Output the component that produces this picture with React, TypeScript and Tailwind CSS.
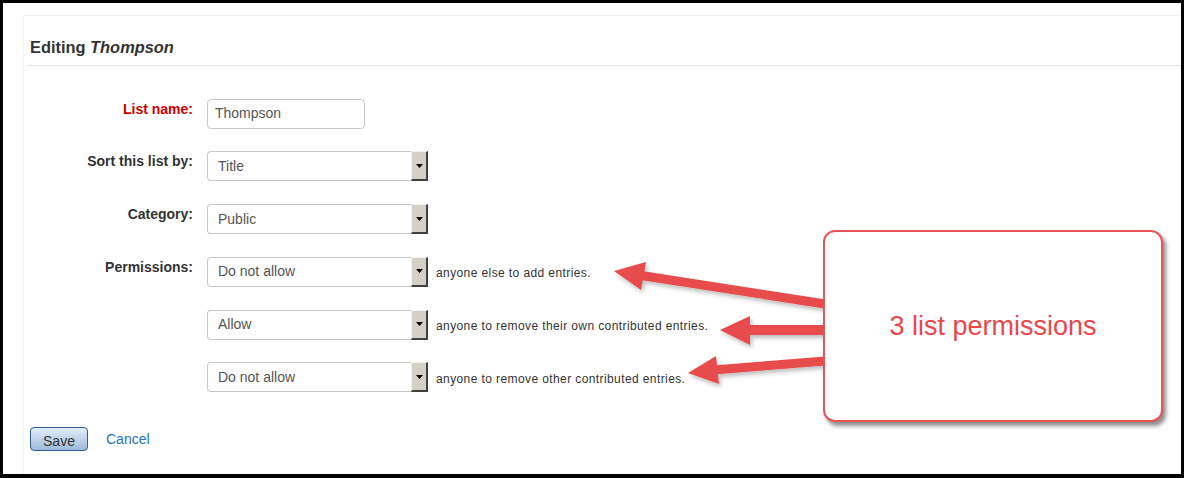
import React from 'react';

const font = { fontFamily: '"Liberation Sans", Arial, sans-serif' };

function Select({ value }: { value: string }) {
  return (
    <div className="flex h-[30px] w-[221px]">
      <div className="flex flex-1 items-center rounded-l-[4px] border border-r-0 border-[#c8c8c8] bg-white pl-[10px] text-[14px] text-[#555]">
        {value}
      </div>
      <div className="flex w-[17px] items-center justify-center border-t border-l border-t-[#f4f2ee] border-l-[#f4f2ee] border-r-2 border-b-2 border-r-[#404040] border-b-[#404040] bg-[#d4d0c8]">
        <svg width="7" height="4" viewBox="0 0 7 4">
          <path d="M0 0h7L3.5 4z" fill="#000" />
        </svg>
      </div>
    </div>
  );
}

function Row({ label, red, children, note }: { label: string; red?: boolean; children: React.ReactNode; note?: string }) {
  return (
    <div className="flex items-start">
      <div className={`w-[183px] pr-[14px] text-right text-[14px] leading-[20px] font-bold ${red ? 'text-[#cc0000]' : 'text-[#333]'}`}>
        {label}
      </div>
      {children}
      {note && (
        <div className="ml-[8px] self-center pt-[3px] text-[12px] tracking-[0.4px] text-[#333]">{note}</div>
      )}
    </div>
  );
}

export default function App() {
  return (
    <div className="relative h-[478px] w-[1184px] overflow-hidden border-t-[3px] border-r-[3px] border-b-[4px] border-l-[3px] border-black bg-white" style={font}>
      <div className="ml-[20px] mt-[12px] h-[460px] border-t border-l border-[#f3f3f3]">
        <h2 className="pl-[6px] pt-[19px] pb-[5px] text-[16.4px] font-bold text-[#333]">
          Editing <i>Thompson</i>
        </h2>
        <div className="ml-[4px] border-t border-[#e2e2e2]" />

        <div className="mt-[33px] flex flex-col gap-[22.75px]">
          <Row label="List name:" red>
            <div className="flex h-[30px] w-[158px] items-center rounded-[4px] border border-[#c8c8c8] bg-white pl-[7px] text-[14px] text-[#555]">
              Thompson
            </div>
          </Row>
          <Row label="Sort this list by:">
            <Select value="Title" />
          </Row>
          <Row label="Category:">
            <Select value="Public" />
          </Row>
          <Row label="Permissions:" note="anyone else to add entries.">
            <Select value="Do not allow" />
          </Row>
          <Row label="" note="anyone to remove their own contributed entries.">
            <Select value="Allow" />
          </Row>
          <Row label="" note="anyone to remove other contributed entries.">
            <Select value="Do not allow" />
          </Row>
        </div>

        <div className="mt-[35px] flex items-center gap-[18px] pl-[6px]">
          <button className="h-[24px] w-[58px] rounded-[4px] border border-[#2f5f8f] bg-gradient-to-b from-[#e4eef8] to-[#9cbadb] pt-[3px] text-[14px] text-[#333]">
            Save
          </button>
          <a className="text-[14px] text-[#1e73be]">Cancel</a>
        </div>
      </div>

      {/* annotation arrows */}
      <svg className="pointer-events-none absolute left-[-3px] top-[-3px]" width="1184" height="478">
        <defs>
          <filter id="sh" x="-20%" y="-20%" width="140%" height="140%">
            <feDropShadow dx="2" dy="3" stdDeviation="2" floodColor="#000" floodOpacity="0.25" />
          </filter>
        </defs>
        <g fill="#e84c4b" stroke="#e84c4b" filter="url(#sh)">
          <line x1="638" y1="275" x2="825" y2="304" strokeWidth="9" />
          <polygon points="614,271 641,290 646,262" stroke="none" />
          <line x1="746" y1="330" x2="825" y2="330" strokeWidth="10" />
          <polygon points="720,330 750,316 750,345" stroke="none" />
          <line x1="714" y1="370" x2="825" y2="361" strokeWidth="9" />
          <polygon points="688,373 719,384 716,356" stroke="none" />
        </g>
      </svg>

      <div className="absolute left-[820px] top-[227px] flex h-[192px] w-[340px] items-center justify-center rounded-[12px] border-2 border-[#e85454] bg-white shadow-[3px_4px_4px_rgba(0,0,0,0.45)]">
        <span className="text-[27px] text-[#e8474a]">3 list permissions</span>
      </div>
    </div>
  );
}
